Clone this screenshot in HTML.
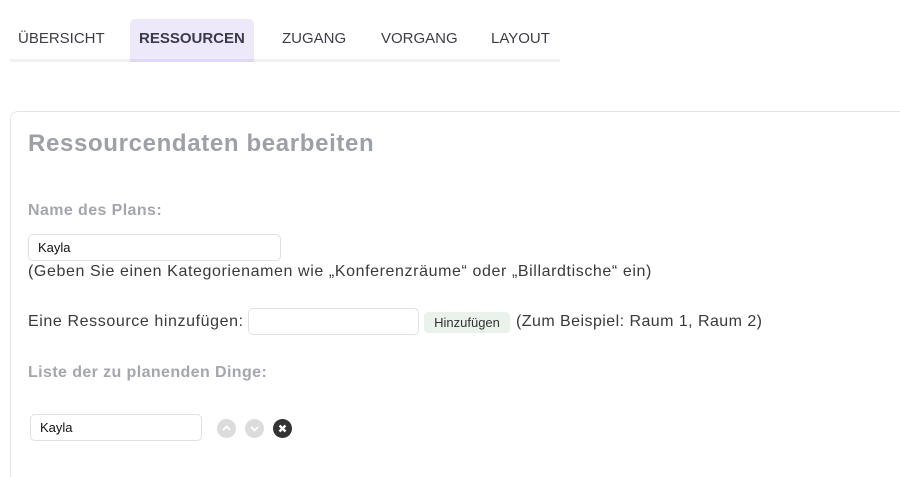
<!DOCTYPE html>
<html><head><meta charset="utf-8"><style>
*{box-sizing:border-box}
html,body{margin:0;width:900px;height:477px;overflow:hidden}
body{background:#fff;font-family:"Liberation Sans",sans-serif;color:#3a3a3a;position:relative}
.tabs{position:absolute;left:10px;top:19px;width:550px;height:43px;border-bottom:3px solid #f0f1f3}
.tab{position:absolute;top:0;height:43px;line-height:40px;font-size:15px;color:#3d3d46}
.tab.act{background:#ede9fb;border-bottom:3px solid #e0d9f6;font-weight:bold;color:#3b3b48;border-radius:5px 5px 0 0;padding:0 9px}
.card{position:absolute;left:10px;top:111px;width:890px;height:366px;border:1px solid #e4e4e6;border-right:none;border-bottom:none;border-radius:8px 0 0 0}
h2{position:absolute;left:28px;top:130px;margin:0;font-size:24px;color:#9ea0a7;font-weight:bold;letter-spacing:0.65px}
.lbl{position:absolute;left:28px;font-size:16px;font-weight:bold;color:#a4a6ad;letter-spacing:0.4px}
.inp{position:absolute;height:27px;border:1px solid #e1e1e3;border-radius:5px;font-size:13px;padding-left:9px;line-height:25px;color:#111}
.t{position:absolute;font-size:16px;color:#3a3a3a;white-space:nowrap;letter-spacing:0.6px}
.btn{position:absolute;left:424px;top:312px;height:21px;width:86px;background:#e9f3ec;border-radius:4px;font-size:13px;line-height:21px;text-align:center;color:#333}
.c{position:absolute;top:419px;width:19px;height:19px;border-radius:50%}
</style></head><body>
<div class="tabs">
<div class="tab" style="left:8px">ÜBERSICHT</div>
<div class="tab act" style="left:120px">RESSOURCEN</div>
<div class="tab" style="left:272px">ZUGANG</div>
<div class="tab" style="left:371px">VORGANG</div>
<div class="tab" style="left:481px">LAYOUT</div>
</div>
<div class="card"></div>
<h2>Ressourcendaten bearbeiten</h2>
<div class="lbl" style="top:202px">Name des Plans:</div>
<div class="inp" style="left:28px;top:234px;width:253px">Kayla</div>
<div class="t" style="left:28px;top:263px">(Geben Sie einen Kategorienamen wie „Konferenzräume“ oder „Billardtische“ ein)</div>
<div class="t" style="left:28px;top:313px">Eine Ressource hinzufügen:</div>
<div class="inp" style="left:248px;top:308px;width:171px"></div>
<div class="btn">Hinzufügen</div>
<div class="t" style="left:516px;top:313px;letter-spacing:0.45px">(Zum Beispiel: Raum 1, Raum 2)</div>
<div class="lbl" style="top:364px">Liste der zu planenden Dinge:</div>
<div class="inp" style="left:30px;top:414px;width:172px;line-height:26px">Kayla</div>
<div class="c" style="left:217px;background:#dcdcdc"><svg width="19" height="19"><path d="M6 11l3.5-3.5L13 11" stroke="#fff" stroke-width="1.8" fill="none"/></svg></div>
<div class="c" style="left:245px;background:#dcdcdc"><svg width="19" height="19"><path d="M6 8l3.5 3.5L13 8" stroke="#fff" stroke-width="1.8" fill="none"/></svg></div>
<div class="c" style="left:273px;background:#333"><svg width="19" height="19"><path d="M6.5 6.5l6 6M12.5 6.5l-6 6" stroke="#fff" stroke-width="2.4"/></svg></div>
</body></html>
